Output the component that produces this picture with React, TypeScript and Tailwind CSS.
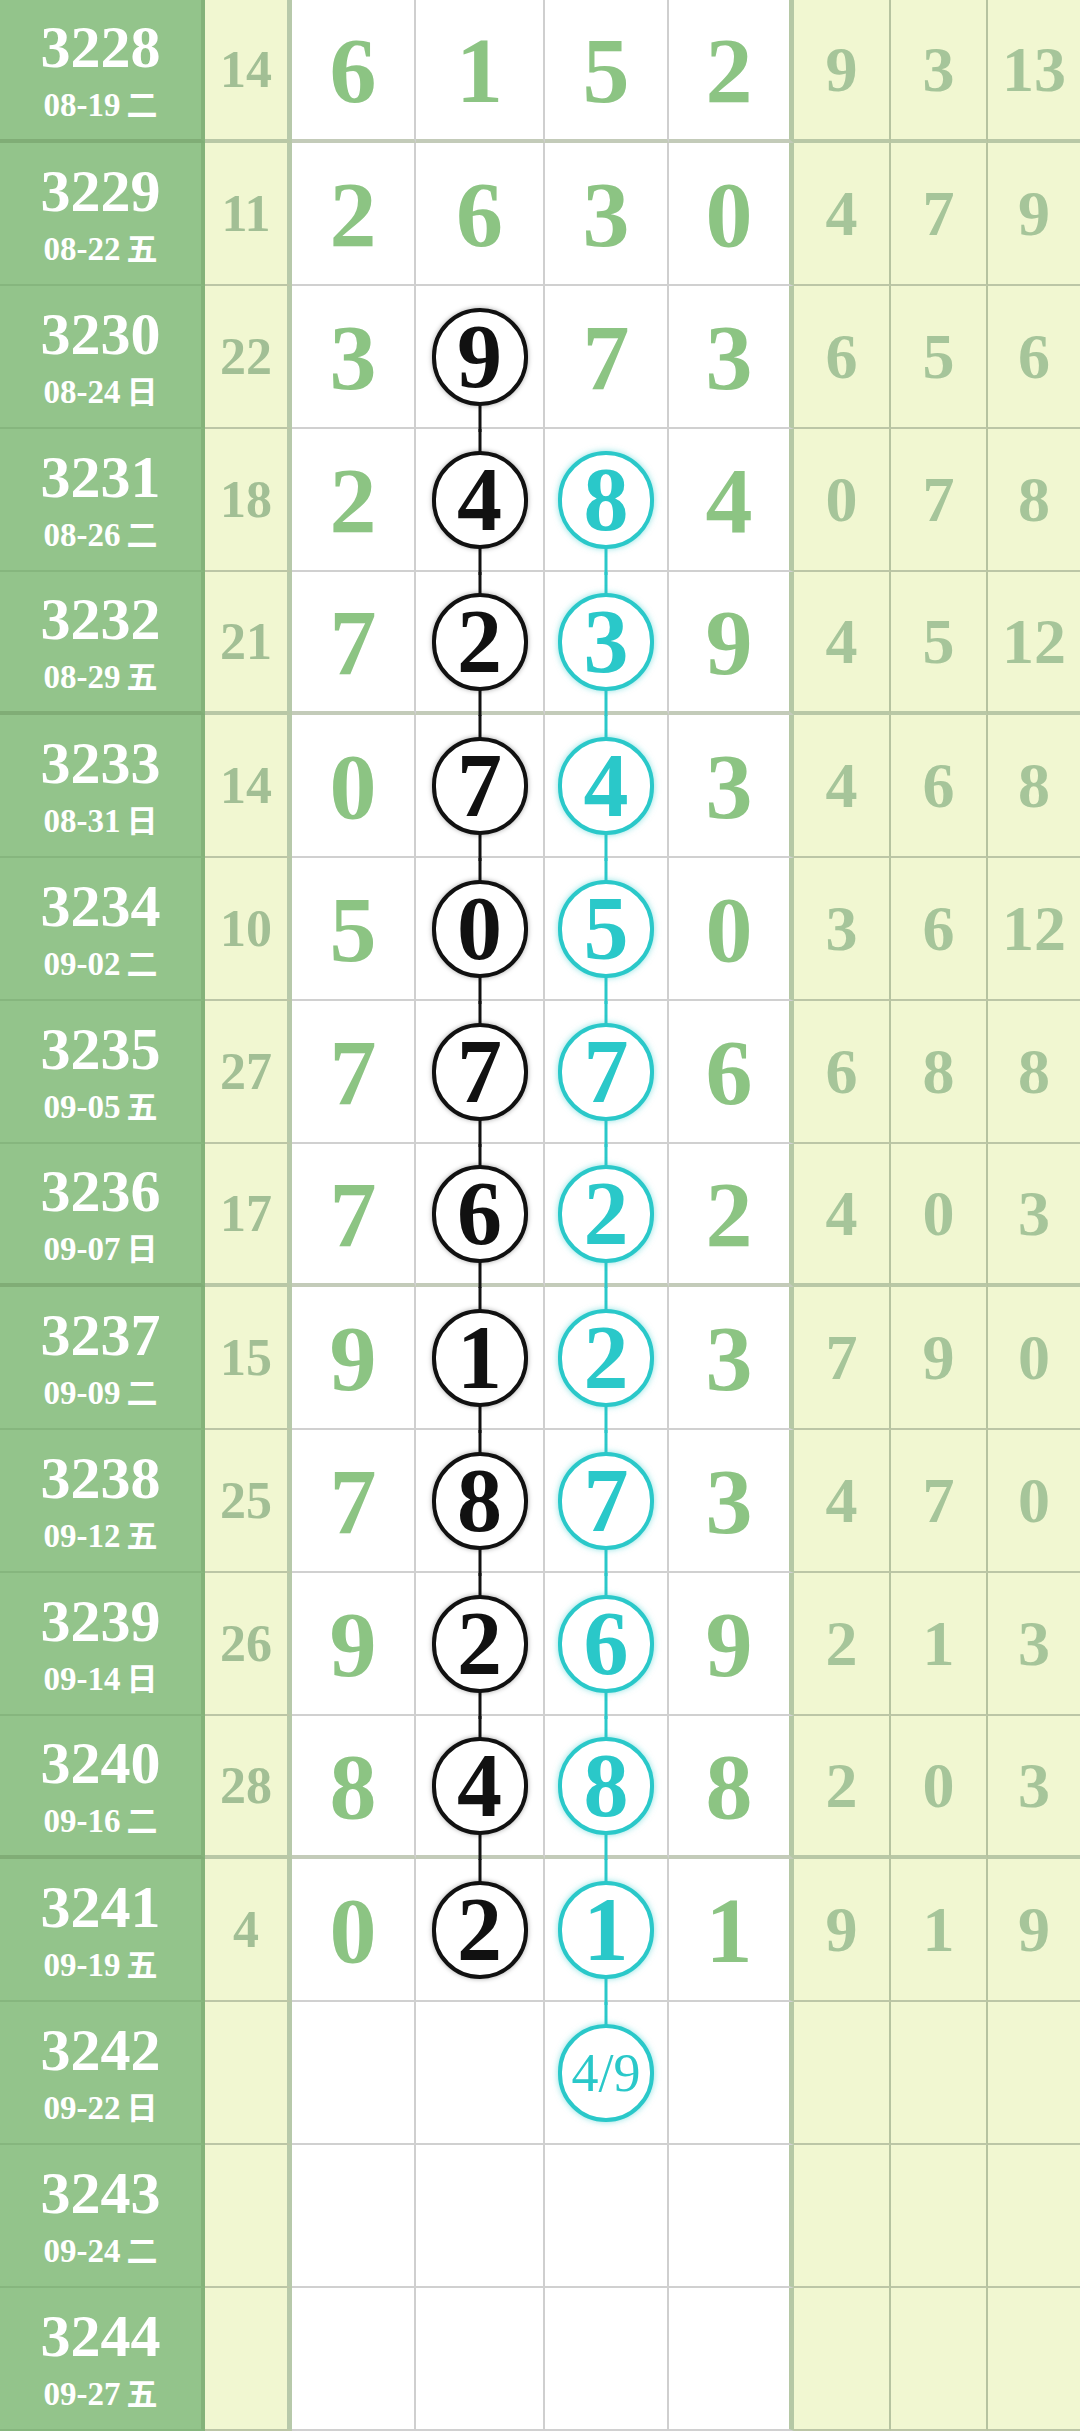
import React from "react";

// ─── 走势表数据 ───────────────────────────────────────────────────────────────

interface Row {
  no: string;
  date: string;
  wd: string;
  sum?: string;
  digits?: string[];
  right?: string[];
}

const rows: Row[] = [
  { no: "3228", date: "08-19", wd: "二", sum: "14", digits: ["6", "1", "5", "2"], right: ["9", "3", "13"] },
  { no: "3229", date: "08-22", wd: "五", sum: "11", digits: ["2", "6", "3", "0"], right: ["4", "7", "9"] },
  { no: "3230", date: "08-24", wd: "日", sum: "22", digits: ["3", "9", "7", "3"], right: ["6", "5", "6"] },
  { no: "3231", date: "08-26", wd: "二", sum: "18", digits: ["2", "4", "8", "4"], right: ["0", "7", "8"] },
  { no: "3232", date: "08-29", wd: "五", sum: "21", digits: ["7", "2", "3", "9"], right: ["4", "5", "12"] },
  { no: "3233", date: "08-31", wd: "日", sum: "14", digits: ["0", "7", "4", "3"], right: ["4", "6", "8"] },
  { no: "3234", date: "09-02", wd: "二", sum: "10", digits: ["5", "0", "5", "0"], right: ["3", "6", "12"] },
  { no: "3235", date: "09-05", wd: "五", sum: "27", digits: ["7", "7", "7", "6"], right: ["6", "8", "8"] },
  { no: "3236", date: "09-07", wd: "日", sum: "17", digits: ["7", "6", "2", "2"], right: ["4", "0", "3"] },
  { no: "3237", date: "09-09", wd: "二", sum: "15", digits: ["9", "1", "2", "3"], right: ["7", "9", "0"] },
  { no: "3238", date: "09-12", wd: "五", sum: "25", digits: ["7", "8", "7", "3"], right: ["4", "7", "0"] },
  { no: "3239", date: "09-14", wd: "日", sum: "26", digits: ["9", "2", "6", "9"], right: ["2", "1", "3"] },
  { no: "3240", date: "09-16", wd: "二", sum: "28", digits: ["8", "4", "8", "8"], right: ["2", "0", "3"] },
  { no: "3241", date: "09-19", wd: "五", sum: "4", digits: ["0", "2", "1", "1"], right: ["9", "1", "9"] },
  { no: "3242", date: "09-22", wd: "日" },
  { no: "3243", date: "09-24", wd: "二" },
  { no: "3244", date: "09-27", wd: "五" },
];

// 黑圈：第二位，3230–3241；青圈：第三位，3231–3242
const BLACK_FROM = 2;
const BLACK_TO = 13;
const TEAL_FROM = 3;
const TEAL_TO = 14;

const serif = "font-['Liberation_Serif','DejaVu_Serif',serif]";

function Ring({
  value,
  teal,
  up,
  down,
  small,
}: {
  value: string;
  teal?: boolean;
  up: boolean;
  down: boolean;
  small?: boolean;
}) {
  const line = teal ? "bg-[#2ac8c9]" : "bg-[#111111]";
  return (
    <div className="relative flex h-full w-full items-center justify-center">
      {up && <div className={`absolute left-1/2 top-0 h-1/2 w-[3px] -translate-x-1/2 ${line}`} />}
      {down && <div className={`absolute left-1/2 top-1/2 -bottom-[5px] z-10 w-[3px] -translate-x-1/2 ${line}`} />}
      <div
        className={
          teal
            ? "relative z-20 flex h-[98px] w-[96px] items-center justify-center rounded-full border-4 border-[#2ac8c9] bg-white shadow-[0_0_6px_rgba(42,200,201,0.55)]"
            : "relative z-20 flex h-[98px] w-[96px] items-center justify-center rounded-full border-4 border-[#111111] bg-white shadow-[0_0_5px_rgba(0,0,0,0.35)]"
        }
      >
        <span
          className={
            small
              ? `${serif} text-[54px] leading-none text-[#2ac8c9]`
              : teal
                ? `${serif} text-[90px] font-bold leading-none text-[#2ac8c9]`
                : `${serif} text-[90px] font-bold leading-none text-[#111111]`
          }
        >
          {value}
        </span>
      </div>
    </div>
  );
}

function TableRow({ row, index }: { row: Row; index: number }) {
  const thick = index % 4 === 0 && index < 13;
  const bGreen = thick ? "border-b-4 border-b-[#80ad76]" : "border-b-2 border-b-[#86b67e]";
  const bYellow = thick ? "border-b-4 border-b-[#b9c8a6]" : "border-b-2 border-b-[#bcc6a6]";
  const bWhite = thick ? "border-b-4 border-b-[#c3cbb9]" : "border-b-2 border-b-[#d0d0d0]";

  const digitCol = [
    "w-[124px] border-r-2 border-r-[#cfcfcf]",
    "w-[129px] border-r-2 border-r-[#cfcfcf]",
    "w-[124px] border-r-2 border-r-[#cfcfcf]",
    "w-[125px] border-r-[5px] border-r-[#b5c8a5]",
  ];
  const rightCol = [
    "w-[97px] border-r-2 border-r-[#b6c3a0]",
    "w-[97px] border-r-2 border-r-[#b6c3a0]",
    "w-[92px]",
  ];

  const isBlack = (c: number) => c === 1 && index >= BLACK_FROM && index <= BLACK_TO;
  const isTeal = (c: number) => c === 2 && index >= TEAL_FROM && index <= TEAL_TO;

  return (
    <div className="flex h-[143px]">
      {/* 期号 + 日期 */}
      <div
        className={`flex w-[205px] flex-col items-center justify-center gap-[12px] border-r-4 border-r-[#84b27a] bg-[#93c48b] ${bGreen}`}
      >
        <span className={`${serif} text-[60px] font-bold leading-none text-white`}>{row.no}</span>
        <span className="flex items-center gap-[6px] leading-none text-white">
          <span className={`${serif} text-[33px] font-bold leading-none`}>{row.date}</span>
          <span className="-translate-y-[3px] font-['Noto_Sans_CJK_SC',sans-serif] text-[31px] font-bold leading-none">
            {row.wd}
          </span>
        </span>
      </div>

      {/* 和值 */}
      <div
        className={`flex w-[87px] items-center justify-center border-r-[5px] border-r-[#b7c9aa] bg-[#f1f7d1] ${bYellow}`}
      >
        <span className={`${serif} text-[52px] font-bold leading-none text-[#a2bf95]`}>{row.sum}</span>
      </div>

      {/* 四位号码 */}
      {digitCol.map((cls, c) => {
        const value = c === 2 && index === TEAL_TO ? "4/9" : row.digits?.[c];
        return (
          <div key={c} className={`relative flex items-center justify-center bg-white ${cls} ${bWhite}`}>
            {isBlack(c) && value ? (
              <Ring value={value} up={index > BLACK_FROM} down={index < BLACK_TO} />
            ) : isTeal(c) && value ? (
              <Ring
                value={value}
                teal
                small={index === TEAL_TO}
                up={index > TEAL_FROM}
                down={index < TEAL_TO}
              />
            ) : (
              <span className={`${serif} text-[94px] font-bold leading-none text-[#8cc483]`}>{value}</span>
            )}
          </div>
        );
      })}

      {/* 右侧三列 */}
      {rightCol.map((cls, c) => (
        <div key={c} className={`flex items-center justify-center bg-[#f1f7d1] ${cls} ${bYellow}`}>
          <span className={`${serif} text-[64px] font-bold leading-none text-[#a6c59a]`}>{row.right?.[c]}</span>
        </div>
      ))}
    </div>
  );
}

export default function App() {
  return (
    <div className="w-[1080px] overflow-hidden bg-white">
      {rows.map((row, i) => (
        <TableRow key={row.no} row={row} index={i} />
      ))}
    </div>
  );
}
